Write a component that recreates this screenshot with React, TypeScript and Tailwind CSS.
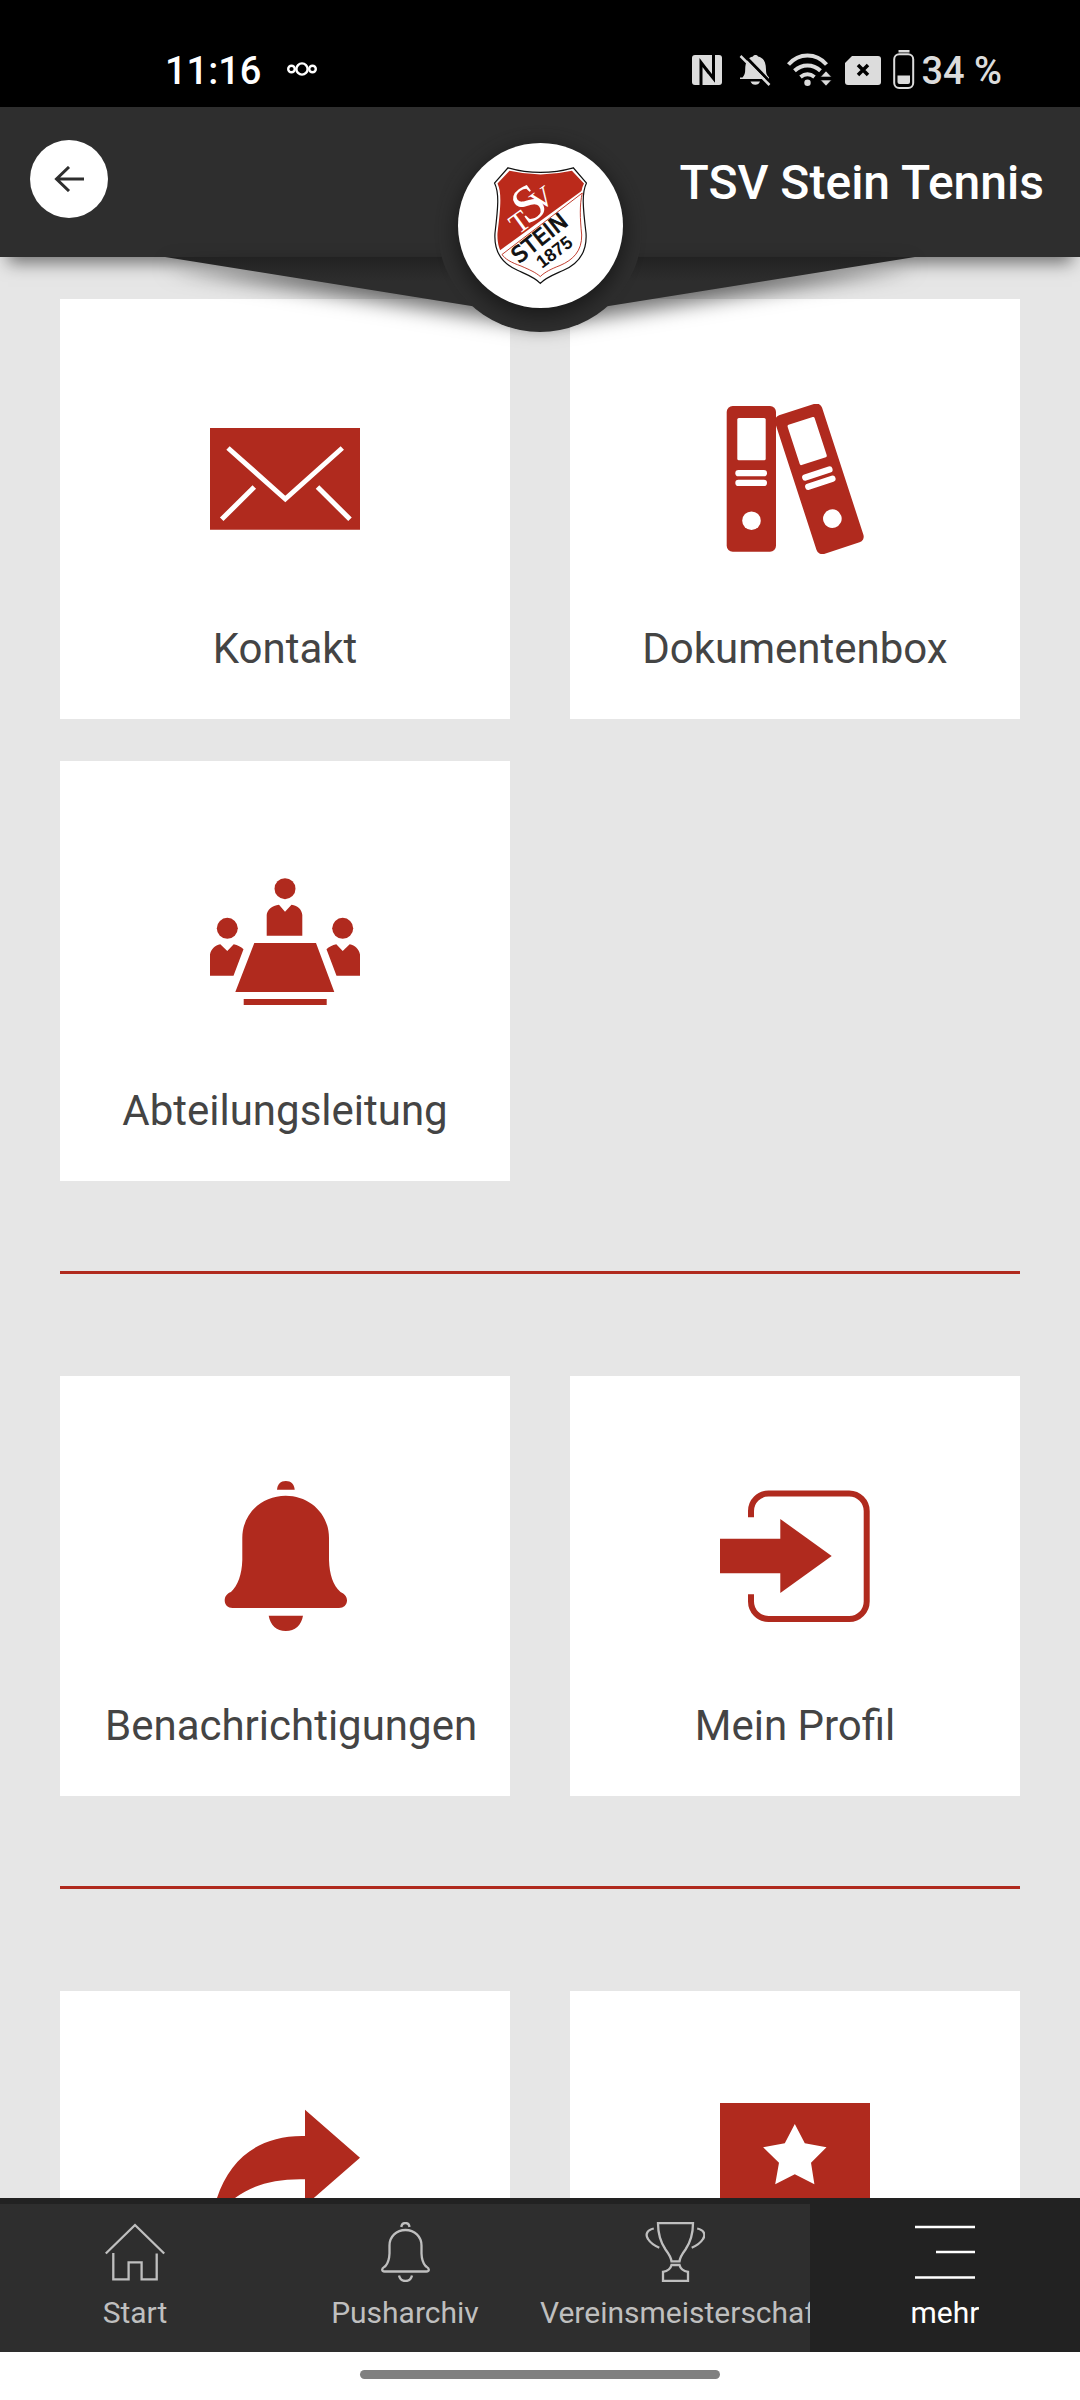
import { useState } from "react";
import type { ReactNode } from "react";

type Tile = {
  id: string;
  label: string;
  showLabel?: boolean;
  icon: ReactNode;
};

type Tab = {
  id: string;
  label: string;
  icon: ReactNode;
};

const Binder = ({ transform }: { transform?: string }) => (
  <g transform={transform}>
    <rect x="6.7" y="2" width="49.3" height="145.7" rx="6" />
    <rect x="17.3" y="14" width="28.4" height="42.3" rx="1.5" fill="#fff" />
    <rect x="15.3" y="66" width="31.7" height="6.3" rx="3.1" fill="#fff" />
    <rect x="15.3" y="75.7" width="31.7" height="6.3" rx="3.1" fill="#fff" />
    <circle cx="31.5" cy="116.7" r="9.3" fill="#fff" />
  </g>
);

const contactTiles: Tile[] = [
  {
    id: "kontakt",
    label: "Kontakt",
    icon: (
      <>
        <path d="M0 24h150v101.7H0z" />
        <path d="M18 44l57.3 51 57-51M44.3 83l-32.6 32.3M107.5 83L140 115.3" fill="none" stroke="#fff" strokeWidth="5" />
      </>
    ),
  },
  {
    id: "dokumentenbox",
    label: "Dokumentenbox",
    icon: (
      <>
        <Binder />
        <Binder transform="translate(68 0) rotate(-18 31.3 75)" />
      </>
    ),
  },
  {
    id: "abteilungsleitung",
    label: "Abteilungsleitung",
    icon: (
      <>
        <circle cx="75" cy="22.7" r="10.5" />
        <circle cx="17.3" cy="62.3" r="10.5" />
        <circle cx="132.7" cy="62.3" r="10.5" />
        <path d="M56.7 69.7V49C57 44 62 39.5 69 38.7L75 45.7l6.5-7C88 39.5 92 44 92.3 49v20.7z" />
        <path d="M0 109.7V88.5C1 83.5 5 79 10.3 78.3L17.3 85l6.4-6.7c4 1 7.3 2.5 9.8 5l-10 26.4z" />
        <path d="M150 109.7V88.5c-1-5-5-9.5-10.3-10.2L132.7 85l-6.4-6.7c-4 1-7.3 2.5-9.8 5l10 26.4z" />
        <path d="M44.3 77H106l18.3 49h-99zM33.7 133h83v6h-83z" />
      </>
    ),
  },
];

const profileTiles: Tile[] = [
  {
    id: "benachrichtigungen",
    label: "Benachrichtigungen",
    icon: (
      <>
        <path d="M67 8.7C67.5 3 70.5 0 75.8 0s8.4 3 8.9 8.7z" />
        <path d="M75.7 14.7C99 14.7 119 32 119 57v22c.5 15 4 25 11.5 32 4 2 6.5 4.5 6.5 8.5 0 4.5-3.5 7.5-8 7.5H22.5c-4.5 0-7.8-3-7.8-7.500s2.500-7 6.300-8.500C28 104 31.800 94 32.300 79V57c0-25 20-42.300 43.400-42.300z" />
        <path d="M58.7 134.7H93C91.5 144 85 150 75.8 150s-15.600-6-17.100-15.300z" />
      </>
    ),
  },
  {
    id: "mein-profil",
    label: "Mein Profil",
    icon: (
      <>
        <path d="M0 57.700h60.300V38l51.400 37-51.400 37V92.300H0z" />
        <path d="M31 36.300V30a17.500 17.500 0 0 1 17.500-17.500h80.700A17.500 17.500 0 0 1 146.700 30v90.500a17.500 17.500 0 0 1-17.500 17.500H48.500A17.500 17.500 0 0 1 31 120.500v-7.200" fill="none" stroke="currentColor" strokeWidth="6" />
      </>
    ),
  },
];

const appTiles: Tile[] = [
  {
    id: "teilen",
    label: "Teilen",
    showLabel: false,
    icon: <path d="M95 13.700l55 48-55 48V83.300C65 82.500 42 89 25 102 12 112 5 122 0 136c0-13 2-24 7-34C20 62 50 39 95 40z" />,
  },
  {
    id: "bewerten",
    label: "Bewerten",
    showLabel: false,
    icon: (
      <>
        <path d="M0 7h150v136H0z" />
        <path d="M74.800 28l10 19.300 21.700 4L91 66.700l3.400 21.600-19.600-10-19.600 10L59 66.700 43.100 51.300l21.700-4z" fill="#fff" />
      </>
    ),
  },
];

const tabs: Tab[] = [
  {
    id: "start",
    label: "Start",
    icon: <path d="M.8 31.5L30 3l29.2 28.5M8.3 31v26.3h15.3v-17h13v17h15.1V31.5" />,
  },
  {
    id: "pusharchiv",
    label: "Pusharchiv",
    icon: (
      <>
        <path d="M26.3 5c.3-2.5 1.6-4 4.1-4s3.8 1.5 4.1 4" />
        <path d="M30.5 8C39.5 8 46.5 14.5 46.5 23.5v8c.2 5.5 1 9 4 12.5 2 1.5 3.3 2 3.3 3.5 0 1.3-1 2-2.5 2H9.7c-1.500 0-2.500-.7-2.500-2 0-1.500 1.300-2 3.300-3.500 3-3.500 3.800-7 4-12.500v-8C14.500 14.500 21.500 8 30.500 8z" />
        <path d="M24 53.500c.8 3.500 3 5.500 6.500 5.500s5.700-2 6.500-5.500" />
      </>
    ),
  },
  {
    id: "vereinsmeisterschaft",
    label: "Vereinsmeisterschaft",
    icon: (
      <>
        <path d="M13 1.200h35C48 13 45.500 20 40.500 27.500 37.500 31.500 35 35 34.500 39.300h-8C26 35 23.500 31.500 20.500 27.500 15.500 20 13 13 13 1.200z" />
        <path d="M8.800 6.500C2 8 0 12.500 3 17c2.500 4 6 6.500 11.300 8.700M52.200 6.500C59 8 61 12.500 58 17c-2.500 4-6 6.500-11.300 8.700" />
        <path d="M26.500 43h8c.8 3.500 3.500 6 8.500 6.800V59H18v-9.200c5-.8 7.700-3.300 8.500-6.800z" />
      </>
    ),
  },
  {
    id: "mehr",
    label: "mehr",
    icon: <path d="M0 5h60M21 30h39M0 55.500h60" strokeWidth="2.5" />,
  },
];

const Crest = () => (
  <svg viewBox="0 0 165 165" className="size-full" role="img" aria-label="TSV Stein 1875">
    <defs>
      <clipPath id="crest-inner">
        <path d="M51.5 27.8Q82.5 35 113.9 27.8L126 40.5C121 50 122.5 65 125.5 90C126.5 110 116 120 103 125.5C94 129 88 132 82.3 137C77 132 71 129 62 125.5C49 120 38.5 110 39.5 90C42.5 65 44 50 39.5 40.5z" />
      </clipPath>
    </defs>
    <path d="M50 24.800Q82.500 34 115.300 24.800L128.500 40C123.500 50 125 65 128 90C129.500 112 118 122 105 127.500C95 132 88 134.500 82.300 140.300C77 134.500 70 132 60 127.500C47 122 35.500 112 37 90C40 65 41.500 50 36.500 40z" fill="#fff" stroke="#111" strokeWidth="1.2" />
    <g clipPath="url(#crest-inner)">
      <path d="M30 20h110v16L30 116z" fill="#bb2a1b" />
    </g>
    <path d="M44 111.500L124.300 50C121.500 62 122 75 123.700 92C124 108 115 117 102 122.500C93 126 87 129 82.300 133.500C77 129 72 127 63 123C53 119.500 47 116 44 111.500z" fill="none" stroke="#bb2a1b" strokeWidth=".9" />
    <g fill="#fff" fontFamily="Liberation Serif, serif">
      <text transform="translate(60 92) rotate(-36)" fontSize="29">T</text>
      <text transform="translate(69 83) rotate(-36)" fontSize="52">S</text>
      <text transform="translate(81 69.5) rotate(-36)" fontSize="29">V</text>
    </g>
    <text transform="translate(61 121) rotate(-38.5)" fontFamily="DejaVu Sans, sans-serif" fontSize="22" fill="#111" stroke="#111" strokeWidth=".9">STEIN</text>
    <text transform="translate(84 126) rotate(-37)" fontFamily="Liberation Sans, sans-serif" fontWeight="700" fontSize="18" fill="#111">1875</text>
  </svg>
);

const StatusBar = () => (
  <div className="flex h-[107px] shrink-0 items-center justify-between bg-black pt-[34px] pr-[78px] pl-[165px] text-[38px] leading-[46px] font-medium text-white">
    <div className="flex items-center gap-[26px]">
      <span>11:16</span>
      <svg viewBox="0 0 30 14" className="mb-1 h-[14px] w-[30px]" fill="none" stroke="currentColor" strokeWidth="2.4">
        <circle cx="4.5" cy="7" r="3.3" />
        <circle cx="15" cy="7" r="5.6" />
        <circle cx="25.5" cy="7" r="3.3" />
      </svg>
    </div>
    <div className="flex items-center text-[#dcdcdc]">
      <svg viewBox="0 0 225 40" className="mr-1.5 mb-0.5 h-10 w-[225px]" fill="currentColor">
        {/* NFC */}
        <rect x="2" y="5" width="30" height="30" rx="3" />
        <path d="M11 35V12.500L19 23M23.500 5v23.500L16 19" fill="none" stroke="#000" strokeWidth="3" />
        {/* Muted bell */}
        <path d="M52.500 27.500c2-2.500 2.700-4 2.700-8 0-8 3-12 7.800-13C63.500 4.500 67.500 4.500 68 6.500c5 1 8 5 8 13 0 4 .7 5.500 3 8v1.500H50v-1.500zM60.500 31.500h9.500c-.7 2-2.300 3.300-4.700 3.300s-4-1.300-4.800-3.300z" />
        <path d="M53.500 4.500l29 30" stroke="#000" strokeWidth="3" />
        <path d="M50.500 6l29 29" stroke="currentColor" strokeWidth="2.500" />
        {/* Wifi */}
        <g fill="none" stroke="currentColor" strokeWidth="4">
          <path d="M98.500 14.500C109 2.500 126 2.500 136.500 14.500M104.500 20.800c7.500-7 18.500-7 26 0M110.500 27c4.500-3.500 9.500-3.500 14 0" />
        </g>
        <circle cx="117.5" cy="32.7" r="3.200" />
        <path d="M136 21l5.500 6h-11zM136 36l5.500-6h-11z" stroke="#000" strokeWidth=".6" />
        {/* SIM */}
        <path d="M162 6h26a3 3 0 0 1 3 3v23a3 3 0 0 1-3 3h-30a3 3 0 0 1-3-3V13z" />
        <path d="M168 15l10 10M178 15l-10 10" stroke="#000" strokeWidth="3.500" />
        {/* Battery */}
        <rect x="208.500" y="0" width="11" height="2.500" />
        <rect x="204.200" y="4.200" width="19" height="33.800" rx="5" fill="none" stroke="currentColor" strokeWidth="2" />
        <path d="M207.500 25.500h12.500v6.500a2 2 0 0 1-2 2h-8.500a2 2 0 0 1-2-2z" />
      </svg>
      <span>34 %</span>
    </div>
  </div>
);

const TileGrid = ({ tiles }: { tiles: Tile[] }) => (
  <div className="grid grid-cols-2 gap-x-[60px] gap-y-[42px]">
    {tiles.map((t) => (
      <button
        key={t.id}
        aria-label={t.label}
        className="flex h-[420px] min-w-0 flex-col items-center gap-[71px] bg-white px-[45px] pt-[105px] text-[42px] leading-[48px] text-[#444]"
      >
        <svg viewBox="0 0 150 150" className="size-[150px] shrink-0 text-[#b02a1e]" fill="currentColor">
          {t.icon}
        </svg>
        {t.showLabel !== false && <span className="w-full text-center">{t.label}</span>}
      </button>
    ))}
  </div>
);

export default function App() {
  const [activeTab, setActiveTab] = useState("mehr");

  return (
    <div className="flex h-screen flex-col overflow-hidden bg-[#e6e6e6] font-['Roboto',sans-serif]">
      <StatusBar />

      {/* Header */}
      <header className="relative z-10 flex h-[150px] shrink-0 items-center justify-between bg-[#2e2e2e] pr-9 pl-[30px] shadow-[0_14px_16px_-8px_rgba(0,0,0,0.5)]">
        <button aria-label="Zurück" className="mb-1.5 flex size-[78px] items-center justify-center rounded-full bg-white text-[#2e2e2e]">
          <svg viewBox="0 0 30 26" className="h-[26px] w-[30px]" fill="none" stroke="currentColor" strokeWidth="3">
            <path d="M30 13H3M15 1L2.500 13 15 25" />
          </svg>
        </button>
        <h1 className="mt-0.5 text-5xl font-medium text-white">TSV Stein Tennis</h1>

        {/* Wedge and club crest hang over the tiles */}
        <svg viewBox="0 0 750 60" className="absolute top-full left-1/2 h-[60px] w-[750px] -translate-x-1/2 drop-shadow-[0_10px_10px_rgba(0,0,0,0.55)]">
          <defs>
            <linearGradient id="wedge" x1="0" y1="0" x2="0" y2="1">
              <stop offset="0" stopColor="#222" />
              <stop offset=".4" stopColor="#2d2d2d" />
            </linearGradient>
          </defs>
          <path d="M0 0h750L375 60z" fill="url(#wedge)" />
        </svg>
        <div className="absolute top-[21px] left-1/2 size-[204px] -translate-x-1/2 rounded-full bg-[#2e2e2e] pt-[15px]">
          <div className="mx-auto size-[165px] rounded-full bg-white shadow-[0_6px_20px_2px_rgba(0,0,0,0.45)]">
            <Crest />
          </div>
        </div>
      </header>

      {/* Tiles */}
      <main className="min-h-0 flex-1 overflow-y-auto px-[60px] pt-[42px] [scrollbar-width:none]">
        <TileGrid tiles={contactTiles} />
        <hr className="mt-[90px] mb-[102px] border-t-3 border-[#b02a1e]" />
        <TileGrid tiles={profileTiles} />
        <hr className="mt-[90px] mb-[102px] border-t-3 border-[#b02a1e]" />
        <TileGrid tiles={appTiles} />
      </main>

      {/* Bottom navigation */}
      <nav className="grid h-[154px] shrink-0 grid-cols-4">
        {tabs.map((tab) => (
          <button
            key={tab.id}
            onClick={() => setActiveTab(tab.id)}
            className={`flex min-w-0 flex-col items-center gap-[13px] overflow-hidden border-t-6 border-[#222] pt-[18px] text-[30px] leading-9 ${activeTab === tab.id ? "bg-[#222] text-white" : "bg-[#2e2e2e] text-[#bfbfbf]"}`}
          >
            <svg viewBox="0 0 60 60" className="size-[60px] shrink-0" fill="none" stroke="currentColor" strokeWidth="2.3">
              {tab.icon}
            </svg>
            <span className="max-w-full overflow-hidden whitespace-nowrap">{tab.label}</span>
          </button>
        ))}
      </nav>

      {/* Gesture bar */}
      <div className="flex h-12 shrink-0 justify-center bg-white pt-[18px]">
        <div className="h-[9px] w-1/3 rounded-full bg-[#808080]" />
      </div>
    </div>
  );
}
